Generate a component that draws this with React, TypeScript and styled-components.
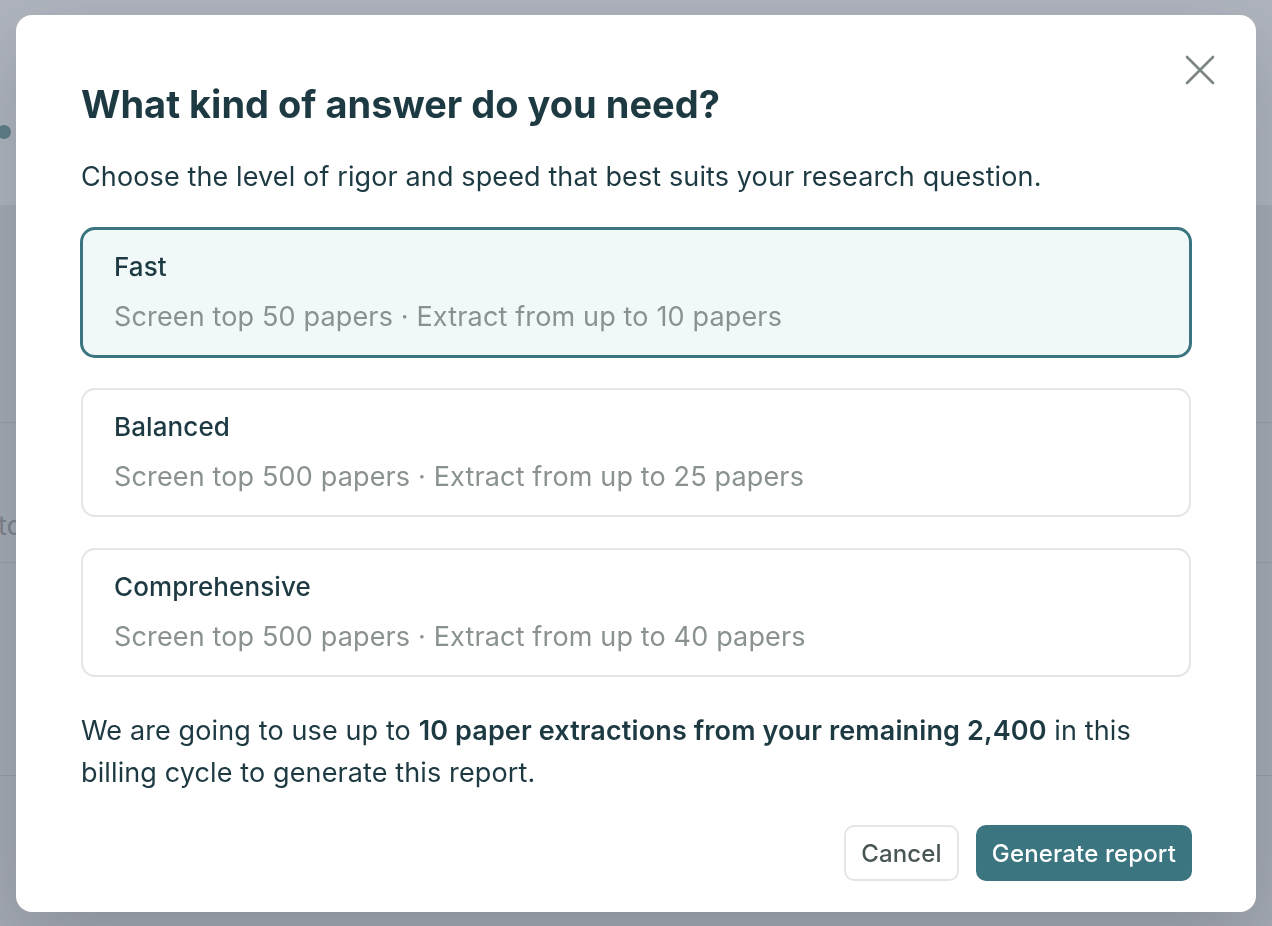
import React from "react";
import styled, { createGlobalStyle } from "styled-components";

const Global = createGlobalStyle`
  html, body { margin: 0; padding: 0; }
  body {
    width: 1272px;
    height: 926px;
    overflow: hidden;
    font-family: Inter, "Noto Sans", "Liberation Sans", sans-serif;
    background: #a5aab4;
  }
  * { box-sizing: border-box; }
`;

const Page = styled.div`
  width: 1272px;
  height: 926px;
  display: flex;
  flex-direction: column;
  background: #a5aab4;
`;

const PageHeader = styled.div`
  height: 205px;
  background: #afb4be;
  display: flex;
  align-items: flex-start;
  padding-top: 125px;
`;

const Dot = styled.div`
  width: 14px;
  height: 14px;
  border-radius: 50%;
  background: #5d7e88;
  margin-left: -3px;
`;

const PageRow = styled.div<{ $h: number; $pt?: number }>`
  height: ${(p) => p.$h}px;
  border-bottom: 1px solid #989da7;
  display: flex;
  align-items: flex-start;
  padding-top: ${(p) => p.$pt ?? 0}px;
  font-size: 27px;
  line-height: 30px;
  color: #7d838c;
`;

const PageText = styled.span`
  margin-left: -2px;
`;

const Overlay = styled.div`
  position: fixed;
  inset: 0;
  display: flex;
  align-items: flex-start;
  justify-content: flex-start;
  padding: 15px 0 0 16px;
`;

const Modal = styled.div`
  width: 1240px;
  height: 897px;
  background: #ffffff;
  border-radius: 16px;
  box-shadow: 0 30px 80px rgba(40, 48, 60, 0.22);
  padding: 65px 64px 31px 65px;
  display: flex;
  flex-direction: column;
  position: relative;
`;

const CloseButton = styled.button`
  position: absolute;
  top: 38px;
  right: 39px;
  width: 34px;
  height: 34px;
  border: none;
  background: transparent;
  padding: 0;
  display: flex;
  align-items: center;
  justify-content: center;
  cursor: pointer;
`;

const Title = styled.h2`
  margin: 0;
  font-size: 38px;
  line-height: 48px;
  font-weight: 700;
  color: #1d3a43;
`;

const Subtitle = styled.p`
  margin: 29px 0 0 0;
  font-size: 27px;
  line-height: 40px;
  letter-spacing: 0.12px;
  color: #1d3a43;
`;

const Options = styled.div`
  margin-top: 31px;
  display: flex;
  flex-direction: column;
  gap: 31px;
`;

const OptionCard = styled.div<{ $selected?: boolean }>`
  width: 1110px;
  border-radius: 14px;
  border: 2px solid ${(p) => (p.$selected ? "#3a7580" : "#e4e6e6")};
  box-shadow: ${(p) => (p.$selected ? "0 0 0 1px #3a7580" : "none")};
  background: ${(p) => (p.$selected ? "#f0f8f8" : "#ffffff")};
  padding: 19px 31px 20px 31px;
  display: flex;
  flex-direction: column;
  gap: 14px;
`;

const OptionTitle = styled.div`
  font-size: 26px;
  line-height: 36px;
  font-weight: 500;
  letter-spacing: 0.1px;
  color: #1d3a43;
`;

const OptionDesc = styled.div`
  font-size: 27px;
  line-height: 36px;
  letter-spacing: 0.15px;
  color: #8a9191;
`;

const Note = styled.p`
  margin: 33px 0 0 0;
  font-size: 27px;
  line-height: 42px;
  letter-spacing: 0.12px;
  color: #1d3a43;
  strong { font-weight: 600; }
`;

const Footer = styled.div`
  margin-top: auto;
  display: flex;
  justify-content: flex-end;
  gap: 17px;
`;

const Button = styled.button<{ $primary?: boolean }>`
  height: 56px;
  border-radius: 10px;
  font-family: inherit;
  font-size: 24px;
  font-weight: 500;
  letter-spacing: 0.15px;
  padding: 0 ${(p) => (p.$primary ? 16 : 15)}px;
  border: ${(p) => (p.$primary ? "none" : "2px solid #e4e6e6")};
  background: ${(p) => (p.$primary ? "#3a7580" : "#ffffff")};
  color: ${(p) => (p.$primary ? "#ffffff" : "#4a5656")};
  cursor: pointer;
`;

const options = [
  { title: "Fast", desc: "Screen top 50 papers · Extract from up to 10 papers", selected: true },
  { title: "Balanced", desc: "Screen top 500 papers · Extract from up to 25 papers" },
  { title: "Comprehensive", desc: "Screen top 500 papers · Extract from up to 40 papers" },
];

export default function App() {
  return (
    <>
      <Global />
      <Page>
        <PageHeader>
          <Dot />
        </PageHeader>
        <PageRow $h={218} />
        <PageRow $h={140} $pt={88}>
          <PageText>to</PageText>
        </PageRow>
        <PageRow $h={213} />
      </Page>
      <Overlay>
        <Modal>
          <CloseButton aria-label="Close">
            <svg width="32" height="32" viewBox="0 0 32 32" fill="none">
              <path d="M3 3 L29 29 M29 3 L3 29" stroke="#7b8584" strokeWidth="2.6" strokeLinecap="round" />
            </svg>
          </CloseButton>
          <Title>What kind of answer do you need?</Title>
          <Subtitle>Choose the level of rigor and speed that best suits your research question.</Subtitle>
          <Options>
            {options.map((o) => (
              <OptionCard key={o.title} $selected={o.selected}>
                <OptionTitle>{o.title}</OptionTitle>
                <OptionDesc>{o.desc}</OptionDesc>
              </OptionCard>
            ))}
          </Options>
          <Note>
            We are going to use up to <strong>10 paper extractions from your remaining 2,400</strong> in this
            billing cycle to generate this report.
          </Note>
          <Footer>
            <Button>Cancel</Button>
            <Button $primary>Generate report</Button>
          </Footer>
        </Modal>
      </Overlay>
    </>
  );
}
